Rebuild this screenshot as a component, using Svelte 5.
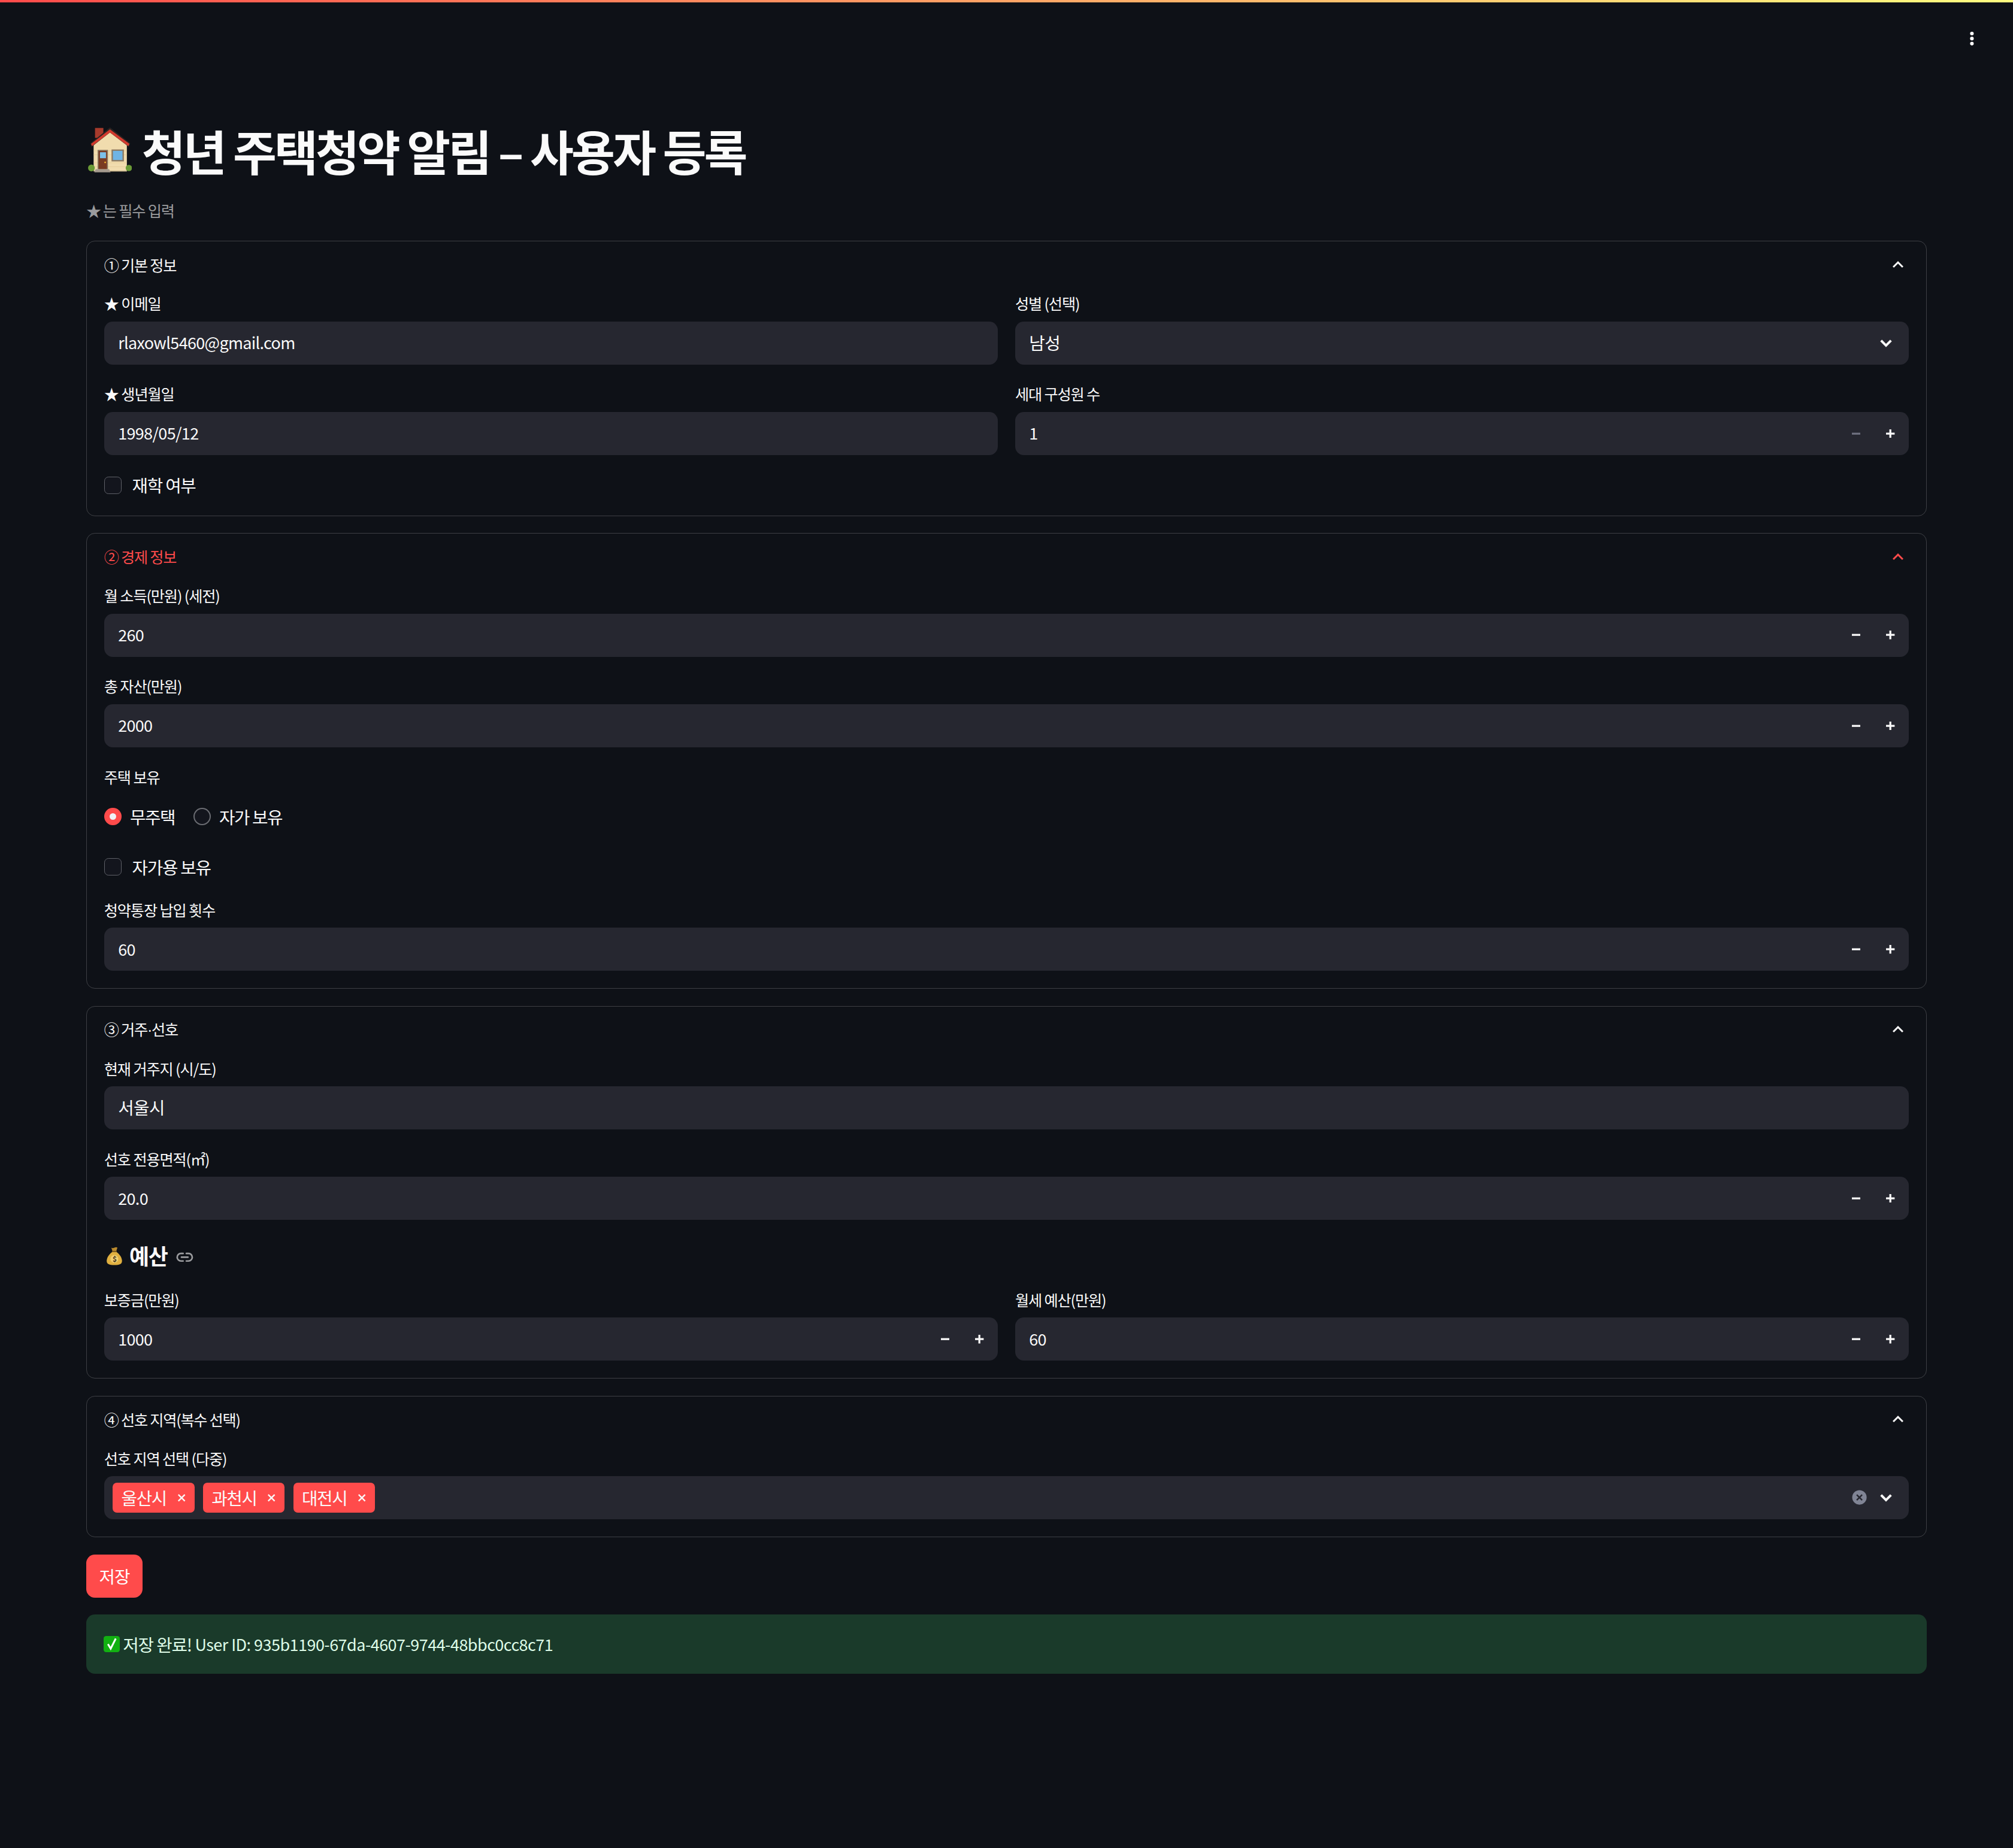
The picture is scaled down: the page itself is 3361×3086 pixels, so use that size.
<script>
  const regions = ["울산시", "과천시", "대전시"];
  const isLatin = (v) => /^[\x00-\x7f]+$/.test(v);
</script>

{#snippet expandLess()}
  <svg class="chev" viewBox="0 0 24 24"><path d="M12 8l-6 6 1.41 1.41L12 10.83l4.59 4.58L18 14z" fill="currentColor"/></svg>
{/snippet}

{#snippet expandMore()}
  <svg class="chev heavy" viewBox="0 0 24 24"><path d="M7.41 8.59L12 13.17l4.59-4.58L18 10l-6 6-6-6 1.41-1.41z" fill="currentColor" stroke="currentColor" stroke-width="0.7"/></svg>
{/snippet}

{#snippet field(label, value)}
  <div class="field">
    <div class="label">{label}</div>
    <div class="box"><span class="val" class:latin={isLatin(value)}>{value}</span></div>
  </div>
{/snippet}

{#snippet number(label, value, minusOff = false)}
  <div class="field">
    <div class="label">{label}</div>
    <div class="box stepper">
      <span class="val latin grow">{value}</span>
      <span class="step" class:off={minusOff}>
        <svg viewBox="0 0 8 8"><rect x="0" y="3.1" width="8" height="1.8" fill="currentColor"/></svg>
      </span>
      <span class="step">
        <svg viewBox="0 0 8 8"><path d="M3.1 0h1.8v3.1H8v1.8H4.900V8H3.100V4.900H0V3.100h3.100z" fill="currentColor"/></svg>
      </span>
    </div>
  </div>
{/snippet}

<div class="page">
  <header>
    <div class="deco"></div>
    <div class="bar">
      <svg class="menu" viewBox="0 0 16 16"><circle cx="8" cy="3.3" r="1.7"/><circle cx="8" cy="8" r="1.7"/><circle cx="8" cy="12.7" r="1.7"/></svg>
    </div>
  </header>

  <main>
    <h1>
      <svg class="house" viewBox="20 50 222 230">
        <rect x="55" y="55" width="42" height="50" fill="#a63a2c"/>
        <path d="M48 140L130 72l85 68v132H48z" fill="#f1dcae"/>
        <path d="M48 170h167M48 190h167M48 230h167M48 250h167" stroke="#e2c893" stroke-width="2"/>
        <path d="M130 52l102 80-7 18-95-72-92 72-6-18z" fill="#2a2422"/>
        <path d="M130 62l98 73-6 11-92-68-90 68-5-11z" fill="#d23a2e"/>
        <rect x="68" y="165" width="52" height="97" fill="#8c7a62"/>
        <rect x="73" y="170" width="42" height="92" fill="#7a3a22"/>
        <rect x="80" y="177" width="30" height="30" fill="#7cc0ea"/>
        <circle cx="106" cy="228" r="4" fill="#f0b030"/>
        <rect x="138" y="163" width="62" height="60" fill="#8d7a60"/>
        <rect x="145" y="170" width="48" height="46" fill="#6fb4e4"/>
        <circle cx="37" cy="256" r="17" fill="#6a9a36"/>
        <circle cx="225" cy="256" r="16" fill="#6a9a36"/>
        <rect x="48" y="272" width="167" height="2" fill="#cdb88d"/>
        <path d="M58 262h68l7 16H52z" fill="#a59a8e"/>
      </svg>
      <span>청년 주택청약 알림 – 사용자 등록</span>
    </h1>
    <p class="caption"><span class="star">★</span>는 필수 입력</p>

    <section class="card">
      <div class="head"><span>① 기본 정보</span>{@render expandLess()}</div>
      <div class="body">
        <div class="cols">
          {@render field("★ 이메일", "rlaxowl5460@gmail.com")}
          <div class="field">
            <div class="label">성별 (선택)</div>
            <div class="box"><span class="val grow">남성</span><span class="sel">{@render expandMore()}</span></div>
          </div>
        </div>
        <div class="cols">
          {@render field("★ 생년월일", "1998/05/12")}
          {@render number("세대 구성원 수", "1", true)}
        </div>
        <label class="check"><span class="tick"></span><span>재학 여부</span></label>
      </div>
    </section>

    <section class="card">
      <div class="head red"><span>② 경제 정보</span>{@render expandLess()}</div>
      <div class="body">
        {@render number("월 소득(만원) (세전)", "260")}
        {@render number("총 자산(만원)", "2000")}
        <div class="field">
          <div class="label">주택 보유</div>
          <div class="radios">
            <span class="radio"><span class="dot on"></span>무주택</span>
            <span class="radio"><span class="dot"></span>자가 보유</span>
          </div>
        </div>
        <label class="check tall"><span class="tick"></span><span>자가용 보유</span></label>
        {@render number("청약통장 납입 횟수", "60")}
      </div>
    </section>

    <section class="card">
      <div class="head"><span>③ 거주<span class="middot">·</span>선호</span>{@render expandLess()}</div>
      <div class="body">
        {@render field("현재 거주지 (시/도)", "서울시")}
        {@render number("선호 전용면적(㎡)", "20.0")}
        <h5>
          <svg class="bag" viewBox="0 0 16 19">
            <path d="M5 1.500c1 .8 2 .4 3 0s2-.8 3 0l-1.200 3.500H6.200z" fill="#b98a2e"/>
            <path d="M6 5.500h4c3.500 2.500 5.500 6 5.500 9 0 3-2.500 4-7.500 4s-7.500-1-7.500-4c0-3 2-6.500 5.500-9z" fill="#e0b040"/>
            <rect x="5.600" y="4.500" width="4.800" height="1.300" rx=".6" fill="#7d5a1e"/>
            <circle cx="8" cy="12.500" r="3.800" fill="#f0cf72"/>
            <text x="8" y="15" font-size="7" font-weight="700" text-anchor="middle" fill="#4a3a20">$</text>
          </svg>
          <span>예산</span>
          <svg class="link" viewBox="0 0 16 10"><path d="M6.500 1.500H4.500a3.500 3.500 0 0 0 0 7h2M9.500 1.500h2a3.500 3.500 0 0 1 0 7h-2M5 5h6" fill="none" stroke="currentColor" stroke-width="1.500" stroke-linecap="round"/></svg>
        </h5>
        <div class="cols">
          {@render number("보증금(만원)", "1000")}
          {@render number("월세 예산(만원)", "60")}
        </div>
      </div>
    </section>

    <section class="card">
      <div class="head"><span>④ 선호 지역(복수 선택)</span>{@render expandLess()}</div>
      <div class="body">
        <div class="field">
          <div class="label">선호 지역 선택 (다중)</div>
          <div class="box multi">
            {#each regions as r}
              <span class="tag">{r}<svg viewBox="0 0 8 8"><path d="M1 1l6 6M7 1L1 7" stroke="currentColor" stroke-width="1.300"/></svg></span>
            {/each}
            <span class="grow"></span>
            <svg class="clear" viewBox="0 0 14 14"><circle cx="7" cy="7" r="6.700" fill="#808495"/><path d="M4.500 4.500l5 5M9.500 4.500l-5 5" stroke="#262730" stroke-width="1.400"/></svg>
            <span class="sel">{@render expandMore()}</span>
          </div>
        </div>
      </div>
    </section>

    <button class="save">저장</button>

    <div class="alert">
      <svg class="ok" viewBox="0 0 16 16"><rect width="16" height="16" rx="2.500" fill="#12b012"/><path d="M4.300 8l2.700 4.500L12 2.500" fill="none" stroke="#fff" stroke-width="1.800"/></svg>
      <span class="done">저장 완료!</span>
      <span class="uid">User ID: 935b1190-67da-4607-9744-48bbc0cc8c71</span>
    </div>
  </main>
</div>

<style>
  :global(body) {
    background: #0e1117;
  }

  .page {
    zoom: 1.8;
    color: #fafafa;
    font-family: "Noto Sans CJK KR", "Noto Sans", sans-serif;
    font-size: 14px;
    line-height: 1.6;
  }

  header {
    height: 96px;
  }
  .deco {
    height: 2px;
    background: linear-gradient(90deg, #ff4b4b, #fffd80);
  }
  .bar {
    display: flex;
    justify-content: flex-end;
    padding: 26px 30px 0 0;
  }
  .menu {
    width: 16px;
    height: 16px;
    fill: #fafafa;
  }

  main {
    display: flex;
    flex-direction: column;
    gap: 16px;
    padding: 0 80px;
  }

  h1 {
    display: flex;
    align-items: center;
    gap: 9px;
    margin: 0;
    padding: 16.8px 0 0;
    font-size: 44px;
    font-weight: 700;
    line-height: 52.8px;
    letter-spacing: -0.048em;
  }
  .house {
    width: 41px;
    height: 42.5px;
    margin-left: 1.500px;
    flex: none;
  }
  .caption {
    margin: 2.400px 0 1.200px;
    color: rgba(250, 250, 250, 0.6);
    letter-spacing: -0.045em;
  }
  .star {
    margin-right: 2px;
  }

  .card {
    border: 1px solid rgba(250, 250, 250, 0.2);
    border-radius: 8px;
  }
  .head {
    display: flex;
    justify-content: space-between;
    align-items: center;
    box-sizing: border-box;
    height: 46px;
    padding: 0 16px 3.500px;
    letter-spacing: -0.05em;
  }
  .head.red {
    color: #ff4b4b;
  }
  .middot {
    font-family: "Liberation Sans", sans-serif;
  }
  .chev {
    width: 20px;
    height: 20px;
    display: block;
  }
  .body {
    display: flex;
    flex-direction: column;
    gap: 16px;
    padding: 0 16px 16px;
  }
  .cols {
    display: grid;
    grid-template-columns: 1fr 1fr;
    gap: 16px;
  }
  .label {
    height: 24px;
    margin-bottom: 4px;
    letter-spacing: -0.045em;
  }
  .box {
    display: flex;
    align-items: center;
    height: 40px;
    background: #262730;
    border-radius: 8px;
    font-size: 16px;
  }
  .stepper {
    padding-right: 1px;
  }
  .val {
    padding-left: 13px;
    padding-bottom: 1px;
    letter-spacing: -0.02em;
  }
  .val.latin {
    font-size: 15px;
    letter-spacing: -0.025em;
  }
  .grow {
    flex: 1;
  }
  .sel {
    padding: 0 11px 0 6px;
  }
  .step {
    display: flex;
    justify-content: center;
    align-items: center;
    width: 32px;
    height: 40px;
  }
  .step svg {
    width: 8px;
    height: 8px;
  }
  .step.off {
    color: #6f7180;
  }

  .check {
    display: flex;
    align-items: center;
    gap: 10px;
    height: 24px;
    font-size: 16px;
    letter-spacing: -0.045em;
  }
  .check.tall {
    height: 25px;
  }
  .tick {
    width: 16px;
    height: 16px;
    box-sizing: border-box;
    border: 1px solid #5f6168;
    border-radius: 4px;
    background: #13151d;
  }
  .radios {
    display: flex;
    align-items: center;
    gap: 17px;
    box-sizing: border-box;
    height: 38.6px;
    padding-top: 2.500px;
    font-size: 16px;
    letter-spacing: -0.05em;
  }
  .radio {
    display: flex;
    align-items: center;
    gap: 8px;
  }
  .dot {
    width: 16px;
    height: 16px;
    box-sizing: border-box;
    border: 1.200px solid #6a6c72;
    border-radius: 50%;
    background: #13151d;
  }
  .dot.on {
    border: 5px solid #ff4b4b;
    background: #f0f2f6;
  }

  h5 {
    display: flex;
    align-items: center;
    gap: 6px;
    box-sizing: border-box;
    margin: 0;
    height: 30.6px;
    padding-top: 4px;
    font-size: 20px;
    font-weight: 700;
    letter-spacing: -0.04em;
  }
  .bag {
    width: 15.500px;
    height: 18px;
    margin-left: 2px;
  }
  .link {
    width: 16px;
    height: 10.500px;
    margin-top: 3px;
    margin-left: 2px;
    color: rgba(250, 250, 250, 0.6);
  }

  .multi {
    gap: 8px;
    padding-left: 8px;
  }
  .tag {
    display: flex;
    align-items: center;
    gap: 10px;
    height: 28px;
    padding: 0 8px;
    background: #ff4b4b;
    border-radius: 4px;
    letter-spacing: -0.05em;
  }
  .tag svg {
    width: 8px;
    height: 8px;
  }
  .clear {
    width: 14px;
    height: 14px;
  }
  .multi .sel {
    padding-left: 0;
  }

  .save {
    align-self: flex-start;
    height: 40px;
    padding: 0 12px;
    border: 0;
    border-radius: 8px;
    background: #ff4b4b;
    color: #fff;
    font: inherit;
    font-size: 16px;
    letter-spacing: -0.04em;
  }

  .alert {
    display: flex;
    align-items: center;
    height: 55px;
    padding: 0 16px;
    border-radius: 8px;
    background: #1a3a2a;
    color: #dffde9;
  }
  .ok {
    width: 15px;
    height: 15px;
    margin-right: 3px;
  }
  .done {
    font-size: 16px;
    letter-spacing: -0.04em;
    margin-right: 3px;
  }
  .uid {
    font-size: 15px;
    letter-spacing: -0.02em;
  }
</style>
